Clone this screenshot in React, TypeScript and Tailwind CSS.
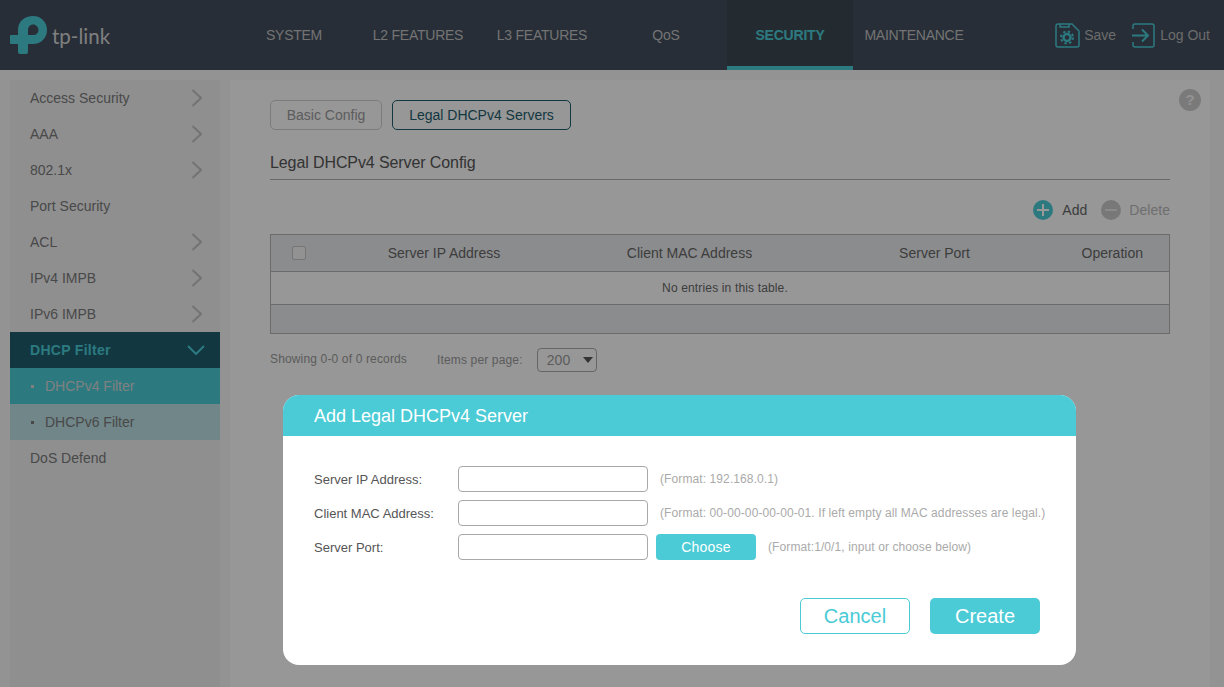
const tabs = ["SYSTEM", "L2 FEATURES", "L3 FEATURES", "QoS", "SECURITY", "MAINTENANCE"];

const menu = [
  { label: "Access Security", arrow: true },
  { label: "AAA", arrow: true },
  { label: "802.1x", arrow: true },
  { label: "Port Security", arrow: false },
  { label: "ACL", arrow: true },
  { label: "IPv4 IMPB", arrow: true },
  { label: "IPv6 IMPB", arrow: true },
];

const formRows = [
  { label: "Server IP Address:", hint: "(Format: 192.168.0.1)" },
  { label: "Client MAC Address:", hint: "(Format: 00-00-00-00-00-01. If left empty all MAC addresses are legal.)" },
  { label: "Server Port:", hint: "(Format:1/0/1, input or choose below)", choose: true },
];

const Logo = () => (
  <svg width="38" height="40" viewBox="0 0 38 40" className="shrink-0">
    <path
      fill="#4acbd6"
      fillRule="evenodd"
      d="M8 20 V15 C8 6 15 1 23 1 C31 1 37 7 37 15 C37 23 31 29 23 29 H18 V37 Q18 39 16 39 H10 Q8 39 8 37 V29 H1 Q0 29 0 28 V21 Q0 20 1 20 Z M18 15 C18 12 20 9.500 23 9.500 C26 9.500 28.500 12 28.500 15 C28.500 18 26 20 23 20 H18 Z"
    />
  </svg>
);

const SaveIcon = () => (
  <svg width="25" height="25" viewBox="0 0 25 25" fill="none" stroke="#4acbd6" strokeWidth="1.500">
    <path d="M3 1 H17 L24 8 V22 C24 23 23 24 22 24 H3 C2 24 1 23 1 22 V3 C1 2 2 1 3 1 Z" />
    <path d="M5 1 V4 H14 V1" />
    <circle cx="12" cy="14.500" r="3.500" strokeWidth="2.500" />
    <circle cx="12" cy="14.500" r="6" strokeWidth="2" strokeDasharray="2.400 2.310" />
  </svg>
);

const LogoutIcon = () => (
  <svg width="23" height="25" viewBox="0 0 23 25" fill="none" stroke="#4acbd6" strokeWidth="1.500">
    <path d="M1 6 V3 C1 2 2 1 3 1 H20 C21 1 22 2 22 3 V22 C22 23 21 24 20 24 H3 C2 24 1 23 1 22 V19" />
    <path d="M0 12.500 H15 M10 6.500 L16 12.500 L10 18.500" strokeWidth="2" />
  </svg>
);

const Chevron = () => (
  <svg width="12" height="18" viewBox="0 0 12 18" fill="none" stroke="#c0c0c0" strokeWidth="2">
    <path d="M1.500 1 L10 9 L1.500 17" />
  </svg>
);

const App = () => {
  return (
    <div className="relative w-[1224px] h-[687px] overflow-hidden bg-[#f5f5f5] font-['Liberation_Sans',Arial,sans-serif]">
      <header className="flex h-[70px] bg-[#414d5c]">
        <div className="flex w-[232px] items-center pl-[10px]">
          <Logo />
          <span className="ml-[4px] mt-[2px] font-['Lato',sans-serif] text-[20.500px] leading-none text-[#d4d4d4]">
            tp-link
          </span>
        </div>
        <nav className="flex">
          {tabs.map(tab =>
            tab === "SECURITY" ? (
              <div
                key={tab}
                className="mx-[-1px] flex w-[126px] items-center justify-center border-b-4 border-[#4acbd6] bg-[#3c4950] pt-[4px] text-[14px] font-bold tracking-[-0.2px] text-[#4acbd6]"
              >
                {tab}
              </div>
            ) : (
              <div key={tab} className="flex w-[124px] items-center justify-center text-[14px] tracking-[-0.25px] text-[#c0c0c0]">
                {tab}
              </div>
            ),
          )}
        </nav>
        <div className="ml-auto flex items-center pr-[14px]">
          <SaveIcon />
          <span className="ml-[4px] text-[14px] text-[#b4b4b4]">Save</span>
          <span className="ml-[16px]">
            <LogoutIcon />
          </span>
          <span className="ml-[5px] text-[14px] text-[#b4b4b4]">Log Out</span>
        </div>
      </header>

      <div className="flex h-[617px] gap-[10px] pl-[10px] pr-[14px] pt-[10px]">
        <aside className="w-[210px] shrink-0 bg-[#eeeeef] text-[14px] text-[#7a7a7a]">
          {menu.map(item => (
            <div key={item.label} className="flex h-[36px] items-center justify-between pl-[20px] pr-[17px]">
              {item.label}
              {item.arrow && <Chevron />}
            </div>
          ))}
          <div className="flex h-[36px] items-center justify-between bg-[#1e5d6c] pl-[20px] pr-[15px] font-bold tracking-[0.3px] text-[#4acbd6]">
            DHCP Filter
            <svg width="18" height="10" viewBox="0 0 18 10" fill="none" stroke="#4acbd6" strokeWidth="2">
              <path d="M1 1 L9 9 L17 1" />
            </svg>
          </div>
          <div className="flex h-[36px] items-center bg-[#4acbd6] pl-[21px] text-[#d6d6d6]">
            <span className="mr-[11px] h-[3px] w-[3px] shrink-0 bg-[#d6d6d6]" />
            DHCPv4 Filter
          </div>
          <div className="flex h-[36px] items-center bg-[#bbdfe3] pl-[21px]">
            <span className="mr-[11px] h-[3px] w-[3px] shrink-0 bg-[#7a7a7a]" />
            DHCPv6 Filter
          </div>
          <div className="flex h-[36px] items-center pl-[20px]">DoS Defend</div>
        </aside>

        <main className="relative flex-1 bg-[#fcfcfc] px-[40px] pt-[20px]">
          <div className="flex gap-[10px] text-[14px]">
            <div className="flex h-[30px] w-[112px] items-center justify-center rounded-[5px] border border-[#cfcfcf] text-[#9a9a9a]">
              Basic Config
            </div>
            <div className="flex h-[30px] w-[179px] items-center justify-center rounded-[5px] border border-[#1e5d6c] text-[#1e5d6c]">
              Legal DHCPv4 Servers
            </div>
          </div>

          <h2 className="mt-[20px] h-[30px] border-b border-[#b0b0b0] text-[16px] leading-[26px] tracking-[-0.1px] text-[#555555]">
            Legal DHCPv4 Server Config
          </h2>

          <div className="mt-[18px] flex h-[24px] items-center justify-end text-[14px]">
            <svg width="20" height="20" viewBox="0 0 20 20">
              <circle cx="10" cy="10" r="10" fill="#4acbd6" />
              <path d="M10 4 V16 M4 10 H16" stroke="#ffffff" strokeWidth="2" />
            </svg>
            <span className="ml-[9px] text-[#666666]">Add</span>
            <svg width="20" height="20" viewBox="0 0 20 20" className="ml-[14px]">
              <circle cx="10" cy="10" r="10" fill="#c8c8c8" />
              <path d="M4 10 H16" stroke="#e6e6e6" strokeWidth="2" />
            </svg>
            <span className="ml-[8px] tracking-[0.05px] text-[#b8b8b8]">Delete</span>
          </div>

          <table className="mt-[12px] w-full table-fixed border-collapse border border-[#b2b2b2] text-[14px] text-[#666666]">
            <thead>
              <tr className="h-[37px] bg-[#e8eaed]">
                <th className="w-[57px] font-normal">
                  <span className="mx-auto block h-[14px] w-[14px] rounded-[2px] border border-[#c4c4c4] bg-[#f4f4f4]" />
                </th>
                <th className="w-[233px] font-normal">Server IP Address</th>
                <th className="w-[258px] font-normal">Client MAC Address</th>
                <th className="w-[232px] font-normal">Server Port</th>
                <th className="pl-[5px] font-normal">Operation</th>
              </tr>
            </thead>
            <tbody>
              <tr className="h-[33px] border-y border-[#b2b2b2]">
                <td colSpan={5} className="pl-[10px] text-center text-[12px] tracking-[0.15px]">
                  No entries in this table.
                </td>
              </tr>
              <tr className="h-[29px] bg-[#e8eaed]">
                <td colSpan={5} />
              </tr>
            </tbody>
          </table>

          <div className="mt-[14px] flex h-[24px] items-center text-[12px] tracking-[0.15px] text-[#999999]">
            <span className="mt-[-2px]">Showing 0-0 of 0 records</span>
            <span className="ml-[30px]">Items per page:</span>
            <div className="ml-[14px] flex h-[24px] w-[60px] items-center justify-between rounded-[4px] border border-[#a8a8a8] pl-[9px] pr-[3px] text-[14px]">
              200
              <span className="h-0 w-0 border-x-[5px] border-t-[6px] border-x-transparent border-t-[#555555]" />
            </div>
          </div>

          <span className="absolute right-[9px] top-[9px] flex h-[22px] w-[22px] items-center justify-center rounded-full bg-[#cccccc] text-[15px] font-bold text-[#f4f4f4]">
            ?
          </span>
        </main>
      </div>

      <div className="absolute inset-0 bg-black/40" />

      <div className="absolute left-[283px] top-[395px] h-[270px] w-[793px] overflow-hidden rounded-[16px] bg-white">
        <div className="flex h-[41px] items-center bg-[#4acbd6] pl-[31px] pt-[1px] text-[18px] text-white">
          Add Legal DHCPv4 Server
        </div>
        <div className="flex flex-col gap-[8px] pl-[31px] pt-[30px]">
          {formRows.map(row => (
            <div key={row.label} className="flex h-[26px] items-center">
              <label className="w-[144px] pt-[1px] text-[13px] text-[#555555]">{row.label}</label>
              <input className="h-[26px] w-[190px] rounded-[4px] border border-[#a8a8a8] bg-white" />
              {row.choose && (
                <button className="ml-[8px] h-[26px] w-[100px] rounded-[4px] bg-[#4acbd6] text-[14px] tracking-[0.2px] text-white">
                  Choose
                </button>
              )}
              <span className="ml-[12px] text-[12px] tracking-[0.1px] text-[#aaaaaa]">{row.hint}</span>
            </div>
          ))}
        </div>
        <div className="mt-[38px] flex justify-end gap-[20px] pr-[36px] text-[20px]">
          <button className="h-[36px] w-[110px] rounded-[5px] border border-[#4acbd6] bg-white text-[#4acbd6]">
            Cancel
          </button>
          <button className="h-[36px] w-[110px] rounded-[5px] bg-[#4acbd6] text-white">Create</button>
        </div>
      </div>
    </div>
  );
};

export default App;
